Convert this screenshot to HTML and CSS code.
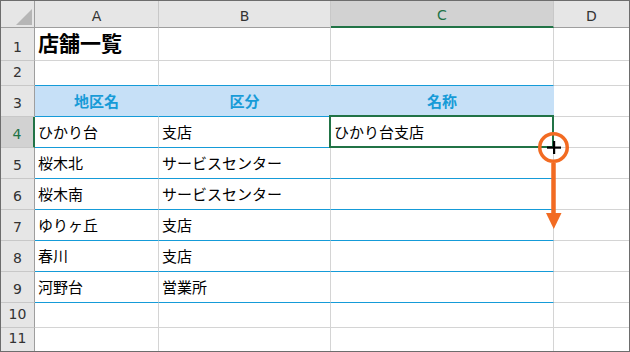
FILE: index.html
```html
<!DOCTYPE html>
<html lang="ja">
<head>
<meta charset="utf-8">
<title>店舗一覧</title>
<link rel="stylesheet" href="styles.css">
</head>
<body>
<div class="sheet">
  <div class="hd corner"><span class="tri"></span></div>
  <div class="hd ch">A</div>
  <div class="hd ch">B</div>
  <div class="hd ch sel-col">C</div>
  <div class="hd ch lastcol">D</div>

  <div class="hd rh">1</div>
  <div class="title">店舗一覧</div>
  <div></div>
  <div></div>
  <div class="lastcol"></div>

  <div class="hd rh">2</div>
  <div class="above"></div>
  <div class="above"></div>
  <div class="above"></div>
  <div class="lastcol"></div>

  <div class="hd rh">3</div>
  <div class="th">地区名</div>
  <div class="th">区分</div>
  <div class="th">名称</div>
  <div class="lastcol"></div>

  <div class="hd rh sel-row">4</div>
  <div class="td">ひかり台</div>
  <div class="td">支店</div>
  <div class="td selected">ひかり台支店</div>
  <div class="lastcol"></div>

  <div class="hd rh">5</div>
  <div class="td">桜木北</div>
  <div class="td">サービスセンター</div>
  <div class="td"></div>
  <div class="lastcol"></div>

  <div class="hd rh">6</div>
  <div class="td">桜木南</div>
  <div class="td">サービスセンター</div>
  <div class="td"></div>
  <div class="lastcol"></div>

  <div class="hd rh">7</div>
  <div class="td">ゆりヶ丘</div>
  <div class="td">支店</div>
  <div class="td"></div>
  <div class="lastcol"></div>

  <div class="hd rh">8</div>
  <div class="td">春川</div>
  <div class="td">支店</div>
  <div class="td"></div>
  <div class="lastcol"></div>

  <div class="hd rh">9</div>
  <div class="td">河野台</div>
  <div class="td">営業所</div>
  <div class="td"></div>
  <div class="lastcol"></div>

  <div class="hd rh">10</div>
  <div></div>
  <div></div>
  <div></div>
  <div class="lastcol"></div>

  <div class="hd rh lastrow">11</div>
  <div class="lastrow"></div>
  <div class="lastrow"></div>
  <div class="lastrow"></div>
  <div class="lastcol lastrow"></div>

  <svg class="fill-handle" width="40" height="102" viewBox="0 0 40 102" xmlns="http://www.w3.org/2000/svg">
    <circle cx="19.5" cy="17.5" r="13.75" fill="none" stroke="#f26b22" stroke-width="3.5"/>
    <rect x="17.25" y="33" width="4.5" height="51" fill="#f26b22"/>
    <polygon points="12,83 27.5,83 19.75,99" fill="#f26b22"/>
    <rect x="13" y="16.5" width="14" height="2.2" fill="#000"/>
    <rect x="19" y="11" width="2.2" height="13" fill="#000"/>
  </svg>
</div>
</body>
</html>
```

FILE: styles.css
```css
body {
  margin: 0;
  background: #ffffff;
}

.sheet {
  position: relative;
  box-sizing: border-box;
  width: 630px;
  height: 352px;
  border: 1px solid #6d6d6d;
  display: grid;
  grid-template-columns: 34px 124px 172px 223px 75px;
  grid-template-rows: 27px 33px 25px repeat(7, 31px) 25px 23px;
  font-family: "Noto Sans CJK JP", sans-serif;
  font-size: 15px;
  line-height: 1;
  color: #000;
  background: #fff;
}

.sheet > div {
  box-sizing: border-box;
  border-right: 1px solid #d4d4d4;
  border-bottom: 1px solid #d4d4d4;
  display: flex;
  align-items: center;
  padding: 0 0 2px 3px;
  white-space: nowrap;
}

.sheet > .lastcol {
  border-right: none;
}

.sheet > .lastrow {
  border-bottom: none;
}

/* headers */
.sheet > .hd {
  background: #e6e6e6;
  font-family: "DejaVu Sans", sans-serif;
  font-size: 14px;
  color: #333;
  justify-content: center;
  padding: 3px 0 0 0;
}

.sheet > .ch {
  border-right-color: #c8c8c8;
  border-bottom-color: #9e9e9e;
}

.sheet > .ch.lastcol {
  border-right: none;
}

.sheet > .rh {
  border-right-color: #9e9e9e;
  border-bottom-color: #c8c8c8;
  align-items: flex-end;
  padding: 0 0 6px 0;
}

.sheet > .corner {
  border-right-color: #9e9e9e;
  border-bottom-color: #9e9e9e;
  justify-content: flex-end;
  align-items: flex-end;
  padding: 0 2px 2px 0;
}

.tri {
  width: 0;
  height: 0;
  border-left: 16px solid transparent;
  border-bottom: 16px solid #b6b6b6;
}

.sheet > .sel-col {
  background: #d2d2d2;
  color: #217346;
  border-bottom: 2px solid #217346;
}

.sheet > .sel-row {
  background: #d2d2d2;
  color: #217346;
  border-right: 2px solid #217346;
}

/* cells */
.sheet > .title {
  font-size: 21px;
  font-weight: bold;
  padding-bottom: 4px;
}

.sheet > .above {
  border-bottom-color: #159bd8;
}

.sheet > .th {
  background: #c6e0f7;
  border-right-color: #c6e0f7;
  border-bottom-color: #159bd8;
  color: #179bd7;
  font-weight: bold;
  justify-content: center;
  padding-left: 0;
}

.sheet > .td {
  border-bottom-color: #159bd8;
}

.sheet > .selected {
  position: relative;
}

.sheet > .selected::after {
  content: "";
  position: absolute;
  top: -2px;
  left: -2px;
  right: -1px;
  bottom: -1px;
  border: 2px solid #217346;
}

.fill-handle {
  position: absolute;
  left: 533px;
  top: 129px;
}
```
